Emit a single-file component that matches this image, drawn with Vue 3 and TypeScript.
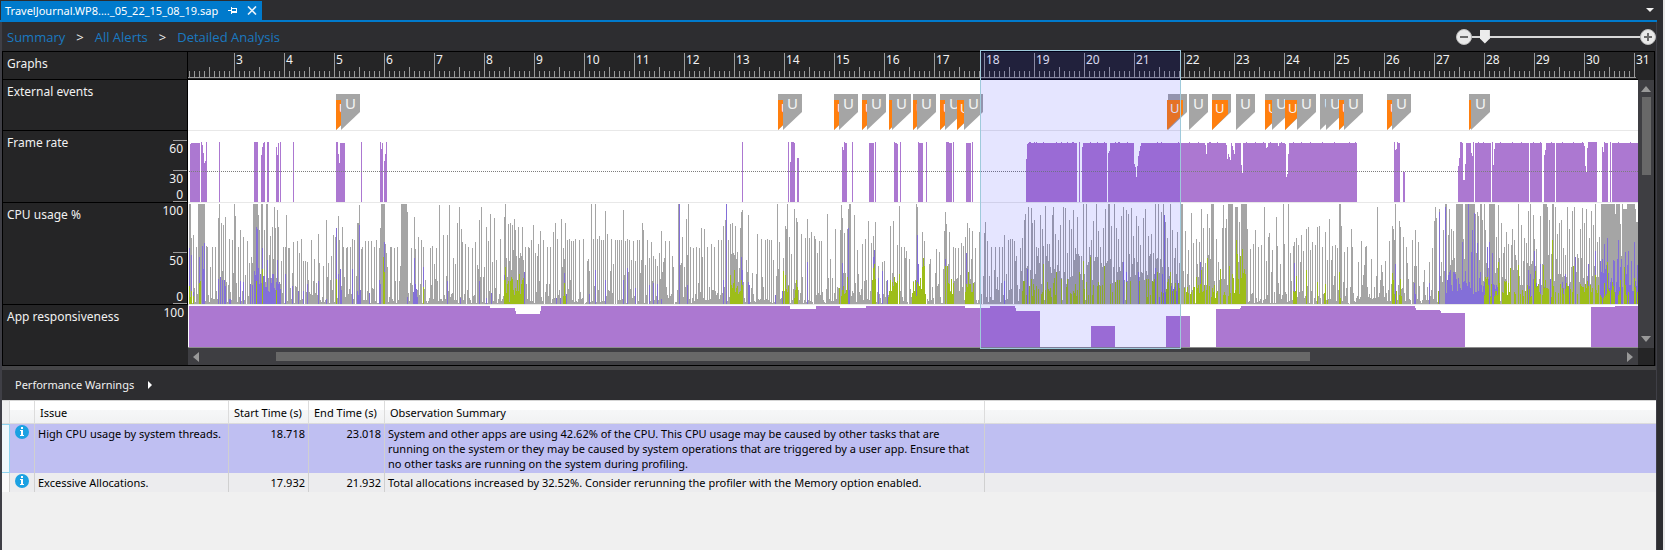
<script setup lang="ts">
import { ref } from 'vue'

type Bar = [x: number, width: number, height: number]

/* The visible window of the timeline starts at pixel 188 and spans 1450 units (50 per second). */
const ORIGIN = 188
const SPAN = 1450

const zoom = ref(5)

/* "x,h" or "x,w,h" entries, separated by blanks */
function parse(list: string): Bar[] {
  return list.trim().split(/\s+/).map((entry) => {
    const n = entry.split(',').map(Number)
    return n.length === 3 ? [n[0], n[1], n[2]] : [n[0], 1, n[1]]
  })
}

function barsPath(bars: Bar[], base: number): string {
  return bars
    .filter((b) => b[2] > 0)
    .map(([x, w, h]) => `M${x - ORIGIN} ${base - h}h${w}v${h}h${-w}z`)
    .join('')
}

function columnsPath(values: number[], base: number): string {
  return barsPath(values.map((h, i): Bar => [i + ORIGIN, 1, Math.round(h)]), base)
}

function pct(x: number): string {
  return ((x - ORIGIN) / SPAN) * 100 + '%'
}

let seed = 20140522
function rand(): number {
  seed = (seed * 1664525 + 1013904223) % 4294967296
  return seed / 4294967296
}

/* ---- ruler ---- */
const seconds = Array.from({ length: 29 }, (_, i) => ({ n: i + 3, x: 234 + i * 50 }))
const ticks = (() => {
  let d = ''
  for (let x = 189; x < 1638; x += 5) {
    const k = (x - 234) / 5
    const h = k % 10 === 0 ? 25 : k % 5 === 0 ? 11 : 7
    d += `M${x - ORIGIN} ${26 - h}h1v${h}h-1z`
  }
  return d
})()

/* ---- user input events; a "b" flag lies wholly behind the next one and carries no letter ---- */
type Flag = { x: number; kind: 'idle' | 'hot'; text: string }
const flags: Flag[] = `336b 336o 341g 778b 778o 783g 834b 834o 839g 862b 862o 867g 889b 889o 892g 913b 913o 917g
940b 940o 945g 957b 957o 964g 1168b 1167o 1189g 1212b 1212o 1236g 1265b 1265o 1272g 1285b 1285o 1297g
1320g 1326g 1339b 1339o 1344g 1387b 1387o 1392g 1469b 1469o 1471g`
  .split(/\s+/)
  .map((s) => ({ x: parseInt(s, 10), kind: s.endsWith('o') ? 'hot' : 'idle', text: s.endsWith('b') ? '' : 'U' }))

/* ---- frame rate ---- */
const frameBars = parse(`
190,58 191,9,59 201,60 202,57 203,49 204,39 205,41 206,60 219,60 254,4,60 261,47 262,55 263,59 264,60
267,2,60 276,55 277,47 278,59 280,60 293,60 336,2,60 338,48 339,39 340,5,59 361,60 380,60 381,53 382,59
384,41 385,48 386,60 742,60 788,60 790,40 791,3,60 794,59 797,2,44 842,55 843,52 844,60 845,2,59 852,60
869,5,59 875,60 894,60 895,2,59 897,58 900,60 918,60 919,4,59 926,60 946,3,60 949,3,59 953,60
966,5,59 972,60 1026,43 1027,58 1028,49,59 1079,60 1082,55 1083,24,59 1108,49 1109,51 1110,24,59
1134,38 1135,35 1136,25 1137,36 1138,46 1139,51 1140,56 1141,64,59 1205,57 1206,48 1207,19,59
1226,57 1227,43 1228,48 1229,45 1230,42 1231,59 1232,56 1233,52 1234,48 1235,6,59 1241,37 1242,29 1243,23,59
1266,54 1267,55 1268,10,59 1278,56 1279,6,59 1285,58 1286,25 1287,28 1288,48 1289,68,59
1394,60 1395,52 1396,53 1397,60 1398,2,59 1403,2,30 1458,36 1459,44 1460,2,60 1462,59 1463,2,22 1465,38
1466,5,59 1471,49 1472,46 1473,60 1475,16,59 1492,60 1493,37 1494,53 1495,34,59 1530,12,59 1544,47 1545,52
1546,9,59 1556,28,59 1584,56 1585,36 1586,30 1587,54 1588,9,60 1602,55 1603,50 1604,60 1605,3,59 1610,60
1612,26,59 1029,2,60 1034,60 1036,60 1043,60 1056,60 1061,60 1067,60 1072,2,60 1090,60 1097,60 1104,60
1115,60 1118,2,60 1127,60 1157,60 1161,60 1178,60 1189,60 1198,60 1209,2,60 1217,60 1246,60 1255,60
1263,60 1270,60 1281,60 1293,60 1301,60 1310,60 1322,60 1334,60 1349,60 1355,60 1478,60 1483,60 1500,60
1512,60 1521,60 1533,60 1540,60 1551,60 1562,60 1573,60 1582,60 1618,60 1630,60`)
const framePath = barsPath(frameBars, 71)

/* ---- CPU usage ---- */
const cpuPeaks = parse(`
189,2,100 191,66 193,69 196,57 198,7,100 206,58 207,57 210,37 212,57 215,57 218,86 219,100 221,81 223,79
225,87 229,65 232,64 234,100 235,88 238,57 240,74 243,67 247,63 249,41 251,47 253,5,100 258,89 259,74 261,2,100
264,74 266,2,100 270,68 272,77 274,97 275,76 277,94 278,77 281,43 283,57 285,57 286,89 288,2,56 292,31 293,62
297,63 299,51 301,65 305,43 307,42 311,64 314,45 318,70 319,41 323,38 326,84 328,41 331,48 333,69 335,67 338,88
339,64 342,77 343,57 346,56 347,57 350,57 352,65 354,64 357,2,81 359,99 361,55 362,57 365,63 368,63 371,63
374,57 376,64 379,56 380,76 381,4,100 385,60 386,51 390,2,57 394,56 397,57 401,6,100 407,92 411,56 414,87
415,55 418,67 421,64 423,57 430,56 432,58 436,56 439,99 443,69 447,69 449,99 453,46 455,40 457,81 459,97
461,75 462,62 465,60 468,57 472,56 475,62 477,39 479,84 481,97 484,37 486,77 488,63 490,90 492,42 494,86
496,44 500,65 504,87 505,100 506,46 508,80 509,43 510,81 512,79 513,54 514,85 515,74 516,48 518,77 519,46
520,51 522,77 523,44 525,57 528,57 529,56 531,64 533,79 535,51 537,48 538,60 540,73 543,64 547,57 550,57
553,72 555,81 557,65 561,85 562,37 563,56 564,45 565,81 567,64 569,65 571,63 573,63 575,65 579,64 583,65
587,43 589,33 591,100 593,65 595,100 597,65 599,68 601,64 603,64 605,93 607,70 611,65 613,40 615,64 617,64
619,64 621,64 623,94 625,63 627,65 629,64 631,44 633,63 635,43 637,64 639,64 641,44 642,81 643,74 645,39
647,64 649,46 651,62 653,48 655,45 657,38 659,51 661,73 663,42 664,46 665,63 669,63 673,37 678,100 679,37
682,67 686,85 687,49 688,100 690,57 693,56 696,57 699,56 701,76 702,47 704,75 707,57 711,60 714,57 718,64
721,64 723,78 725,84 728,64 730,80 732,81 735,78 737,52 740,76 741,92 742,94 746,44 748,89 757,70 761,65
765,64 767,65 769,64 771,64 773,44 777,100 779,62 783,46 785,78 786,75 787,100 789,67 791,50 794,95 796,86
797,82 801,70 805,66 807,85 809,66 811,72 814,68 815,65 817,51 819,63 821,63 827,90 830,45 835,75 840,74
841,99 842,86 844,71 847,75 848,95 849,2,100 854,89 857,54 862,60 865,65 868,83 871,61 873,68 875,82 878,38
882,42 890,78 893,83 897,59 899,98 901,57 904,57 906,53 909,45 916,100 917,97 922,72 924,63 930,45 936,55
939,52 944,73 945,92 946,80 949,72 953,57 955,56 958,56 961,61 963,58 965,67 967,81 969,76 972,73 975,56
979,72 984,71 985,82 987,63 991,57 995,57 999,57 1002,57 1004,69 1008,64 1010,65 1012,65 1014,63 1016,48
1020,56 1022,66 1024,84 1025,90 1028,97 1031,96 1032,81 1034,84 1036,57 1038,56 1040,89 1042,75 1043,58
1045,98 1047,60 1049,60 1052,89 1053,97 1055,70 1058,64 1060,79 1063,97 1065,96 1067,51 1069,84 1071,75
1073,94 1075,56 1077,87 1079,48 1083,100 1086,100 1089,57 1091,64 1093,83 1096,100 1098,73 1100,57 1103,76
1105,95 1108,2,100 1111,78 1114,100 1116,76 1118,65 1121,88 1123,97 1126,94 1128,90 1131,96 1133,68 1136,88
1138,78 1140,59 1143,86 1145,95 1148,68 1151,70 1155,100 1158,100 1161,92 1163,100 1165,82 1167,66 1170,100
1172,74 1175,56 1177,72 1181,2,100 1185,73 1188,54 1191,91 1193,61 1196,65 1199,62 1201,95 1203,76 1207,90
1209,76 1211,3,100 1216,65 1222,76 1223,99 1225,76 1226,85 1228,5,100 1235,3,97 1239,82 1241,6,100 1247,75
1250,55 1253,60 1255,74 1258,57 1261,59 1264,97 1268,67 1269,71 1272,54 1276,87 1277,58 1280,40 1283,100
1284,60 1288,100 1290,51 1293,58 1294,62 1296,66 1298,59 1301,69 1303,53 1306,75 1308,77 1310,54 1312,62
1315,59 1317,77 1319,78 1322,57 1325,72 1329,85 1332,58 1335,59 1337,56 1339,2,100 1341,78 1344,52 1347,57
1351,75 1352,57 1361,63 1365,57 1366,58 1371,45 1377,97 1381,39 1385,43 1389,63 1392,78 1393,75 1394,64
1395,100 1399,83 1400,77 1403,67 1406,57 1412,64 1415,74 1418,62 1424,34 1429,42 1432,56 1434,83 1435,97
1436,86 1439,95 1443,74 1445,2,100 1448,69 1449,95 1451,75 1453,73 1456,7,100 1463,65 1465,10,100 1475,90
1477,92 1478,88 1480,2,100 1482,84 1484,100 1485,74 1489,6,100 1496,67 1498,99 1501,81 1504,57 1506,72 1508,60
1511,59 1512,75 1514,64 1518,100 1521,79 1524,66 1526,61 1528,93 1530,100 1533,89 1534,65 1536,55 1540,88
1543,4,100 1547,97 1549,84 1552,2,100 1555,97 1557,70 1559,81 1561,84 1563,56 1567,97 1569,75 1572,93 1574,97
1577,50 1580,75 1582,96 1584,81 1586,95 1589,66 1591,93 1593,79 1595,100 1597,62 1599,67 1601,14,100 1615,90
1616,4,100 1620,80 1622,100 1623,4,95 1627,8,100 1635,95 1636,2,82`)

const denseRanges = [[251, 281], [504, 524], [730, 743], [840, 850], [1024, 1180], [1197, 1247], [1440, 1500], [1501, 1638]]

function fill(peaks: Bar[], ranges: number[][]): number[] {
  const v: number[] = new Array(SPAN).fill(0)
  for (const [from, to, top, share] of ranges) {
    for (let x = from; x < to; x++) if (rand() < share) v[x - ORIGIN] = top * (0.25 + 0.75 * rand())
  }
  for (const [x, w, h] of peaks) for (let i = 0; i < w; i++) v[x - ORIGIN + i] = h
  return v
}

const total = (() => {
  const v: number[] = []
  for (let i = 0; i < SPAN; i++) {
    const x = i + ORIGIN
    const dense = denseRanges.some(([a, b]) => x >= a && x < b)
    const r = rand()
    v.push(i === 0 ? 0 : dense ? (r < 0.12 ? 4 : 18 + rand() * 34) : r < 0.32 ? rand() * 4 : 4 + rand() * rand() * 46)
  }
  for (const [x, w, h] of cpuPeaks) for (let k = 0; k < w; k++) v[x - ORIGIN + k] = h
  return v
})()

const appCpu = fill(
  parse(`189,56 191,49 193,12 199,47 202,58 203,35 204,61 218,25 220,27 222,24 224,24 225,18 229,2,5 240,23 243,22 256,77
257,75 258,36 262,56 267,44 277,44 285,30 292,18 298,13 303,13 307,20 318,23 326,5 336,76 338,30 340,35 341,14 352,35
359,79 360,14 369,11 379,24 380,20 384,62 407,7 414,46 415,20 416,15 423,37 447,23 460,6 479,23 486,6 491,11 504,29
524,32 556,6 560,6 564,31 566,10 589,10 595,34 605,24 623,24 627,36 635,16 649,19 653,21 657,20 661,5 679,100 687,19
723,24 726,100 741,47 742,34 748,22 749,19 775,9 782,13 807,42 842,41 848,76 849,14 873,47 874,54 878,26 882,33 887,24
916,23 917,69 918,40 945,45 966,51 1004,23 1027,35 1123,42 1126,32 1138,32 1155,36 1162,30 1164,89 1177,24 1200,42
1294,41 1395,40 1414,21 1415,10 1429,21 1439,92 1445,97 1462,62 1468,100 1471,52 1472,74 1474,91 1477,61 1487,57
1489,62 1492,51 1528,34 1530,30 1534,53 1540,40 1550,25 1565,30 1575,47 1588,40 1595,53 1604,60 1607,66 1618,64
1625,52 1628,53 1634,62`),
  [[250, 281, 34, 0.95], [357, 361, 16, 1], [413, 418, 14, 0.8], [1158, 1180, 18, 0.4], [1446, 1484, 36, 1],
   [1484, 1500, 26, 0.8], [1525, 1575, 26, 0.35], [1600, 1638, 46, 0.9]],
)

const systemCpu = fill(
  parse(`189,18 191,13 199,21 200,23 256,23 262,35 276,14 336,25 383,47 384,32 423,17 504,24 505,37 509,2 564,21 734,34
783,33 785,29 796,24 847,27 872,24 873,36 874,40 894,27 899,30 922,37 923,46 924,38 945,38 947,38 951,25 966,20 968,32
1043,40 1056,32 1079,32 1083,43 1090,47 1104,38 1117,24 1139,23 1157,32 1170,32 1196,27 1201,34 1207,46 1220,35 1229,38
1236,64 1237,50 1240,48 1242,55 1296,28 1306,34 1317,22 1325,20 1339,32 1392,31 1393,24 1400,25 1438,13 1498,42
1510,36 1518,39 1535,33 1543,39 1552,64 1573,38 1595,29 1607,42 1624,37 1634,26`),
  [[189, 194, 10, 0.6], [505, 524, 30, 1], [563, 566, 20, 1], [730, 743, 29, 1], [783, 789, 24, 0.9], [794, 798, 22, 1],
   [839, 849, 22, 0.8], [872, 876, 30, 1], [888, 900, 24, 0.8], [912, 926, 28, 0.9], [945, 954, 24, 0.7],
   [965, 974, 22, 0.9], [1022, 1180, 26, 0.5], [1183, 1200, 22, 0.7], [1200, 1232, 22, 0.6], [1232, 1246, 36, 0.95],
   [1293, 1297, 16, 1], [1315, 1341, 14, 0.2], [1391, 1402, 16, 0.6], [1484, 1580, 27, 0.55], [1580, 1616, 24, 0.75],
   [1616, 1638, 26, 0.4]],
)

const totalPath = columnsPath(total, 101)
const appPath = columnsPath(appCpu, 101)
const systemPath = columnsPath(systemCpu, 101)

/* ---- app responsiveness ---- */
const responsePath = barsPath(
  parse(`189,301,41 490,25,39 515,1,36 516,24,33 540,1,36 541,249,41 790,26,38 816,24,41 840,26,39 866,99,41 965,25,39
990,25,41 1015,1,39 1016,24,36 1091,24,21 1166,24,31 1216,24,38 1240,1,39 1241,174,41 1415,1,39 1416,24,37 1440,1,36
1441,24,34 1591,24,40 1615,23,41`),
  42,
)

const warnings = [
  {
    issue: 'High CPU usage by system threads.',
    start: '18.718',
    end: '23.018',
    summary:
      'System and other apps are using 42.62% of the CPU. This CPU usage may be caused by other tasks that are running on the system or they may be caused by system operations that are triggered by a user app. Ensure that no other tasks are running on the system during profiling.',
    selected: true,
  },
  {
    issue: 'Excessive Allocations.',
    start: '17.932',
    end: '21.932',
    summary: 'Total allocations increased by 32.52%. Consider rerunning the profiler with the Memory option enabled.',
    selected: false,
  },
]
</script>

<template>
  <div class="window">
    <header class="tabs">
      <div class="tab">
        <span class="tab-name">TravelJournal.WP8...._05_22_15_08_19.sap</span>
        <button class="icon-btn" type="button" aria-label="Pin tab">
          <svg width="9" height="9" viewBox="0 0 9 9" shape-rendering="crispEdges" aria-hidden="true">
            <path d="M0 4h3v1H0zM3 1h1v7H3zM4 2h4v1H4zM4 5h4v2H4zM8 2h1v5H8z" fill="#fff" />
          </svg>
        </button>
        <button class="icon-btn" type="button" aria-label="Close tab">
          <svg width="10" height="9" viewBox="0 0 10 9" aria-hidden="true">
            <path d="M1 0.5L9 8.5M9 0.5L1 8.5" stroke="#e6f2fa" stroke-width="1.6" />
          </svg>
        </button>
      </div>
      <button class="icon-btn tab-list" type="button" aria-label="Open documents">
        <svg width="8" height="4" viewBox="0 0 8 4" aria-hidden="true"><path d="M0 0h8L4 4z" fill="#f1f1f1" /></svg>
      </button>
    </header>

    <div class="client">
      <div class="toolbar">
        <nav class="crumbs" aria-label="Breadcrumb">
          <a href="#summary">Summary</a>
          <span>&gt;</span>
          <a href="#alerts">All Alerts</a>
          <span>&gt;</span>
          <a href="#analysis">Detailed Analysis</a>
        </nav>
        <div class="zoom">
          <button class="round" type="button" aria-label="Zoom out">
            <svg width="16" height="16" viewBox="0 0 16 16" aria-hidden="true">
              <circle cx="8" cy="8" r="7.5" fill="#e9e9e9" stroke="#bdbdbd" />
              <path d="M4 7h8v2H4z" fill="#6b6b6b" />
            </svg>
          </button>
          <input v-model="zoom" class="slider" type="range" min="0" max="100" aria-label="Zoom level" />
          <button class="round" type="button" aria-label="Zoom in">
            <svg width="16" height="16" viewBox="0 0 16 16" aria-hidden="true">
              <circle cx="8" cy="8" r="7.5" fill="#e9e9e9" stroke="#bdbdbd" />
              <path d="M4 7h3V4h2v3h3v2H9v3H7V9H4z" fill="#6b6b6b" />
            </svg>
          </button>
        </div>
      </div>

      <section class="graphs">
        <div class="labels">
          <div class="label ruler-row">Graphs</div>
          <div class="label events-row">External events</div>
          <div class="label frame-row">
            Frame rate
            <div class="scale frame-scale"><span>60</span><span>30</span><span>0</span></div>
          </div>
          <div class="label cpu-row">
            CPU usage %
            <div class="scale cpu-scale"><span>100</span><span>50</span><span>0</span></div>
          </div>
          <div class="label response-row">
            App responsiveness
            <div class="scale response-scale"><span>100</span></div>
          </div>
        </div>

        <div class="plots">
          <div class="ruler ruler-row">
            <svg class="fill" :viewBox="`0 0 ${SPAN} 27`" preserveAspectRatio="none" shape-rendering="crispEdges" aria-hidden="true">
              <path :d="ticks" fill="#999" />
              <rect x="0" y="25" width="1448" height="1" fill="#999" />
            </svg>
            <span v-for="s in seconds" :key="s.n" class="second" :style="{ left: pct(s.x) }">{{ s.n }}</span>
          </div>
          <div class="plot events-row">
            <span v-for="(f, i) in flags" :key="i" class="flag" :class="f.kind" :style="{ left: pct(f.x) }">{{ f.text }}</span>
          </div>
          <div class="plot frame-row">
            <svg class="fill" :viewBox="`0 0 ${SPAN} 71`" preserveAspectRatio="none" shape-rendering="crispEdges" aria-hidden="true">
              <path :d="framePath" fill="#ac78d1" />
              <path d="M1 40.5H1450" stroke="#7d7d7d" stroke-dasharray="1 1" />
            </svg>
          </div>
          <div class="plot cpu-row">
            <svg class="fill" :viewBox="`0 0 ${SPAN} 101`" preserveAspectRatio="none" shape-rendering="crispEdges" aria-hidden="true">
              <path :d="totalPath" fill="#a5a5a5" />
              <path :d="appPath" fill="#836fd8" />
              <path :d="systemPath" fill="#9dbd19" />
            </svg>
          </div>
          <div class="plot response-plot">
            <svg class="fill" :viewBox="`0 0 ${SPAN} 42`" preserveAspectRatio="none" shape-rendering="crispEdges" aria-hidden="true">
              <path :d="responsePath" fill="#ac78d1" />
            </svg>
          </div>
          <div class="selection" :style="{ left: pct(980), width: (201 / SPAN) * 100 + '%' }"></div>
          <div class="hscroll">
            <svg width="6" height="10" viewBox="0 0 6 10" aria-hidden="true"><path d="M6 0v10L0 5z" fill="#999" /></svg>
            <div class="htrack"><div class="hthumb"></div></div>
            <svg width="6" height="10" viewBox="0 0 6 10" aria-hidden="true"><path d="M0 0v10l6-5z" fill="#999" /></svg>
          </div>
        </div>

        <div class="side">
          <div class="side-top"></div>
          <div class="vscroll">
            <svg width="10" height="6" viewBox="0 0 10 6" aria-hidden="true"><path d="M0 6h10L5 0z" fill="#999" /></svg>
            <div class="vtrack"><div class="vthumb"></div></div>
            <svg width="10" height="6" viewBox="0 0 10 6" aria-hidden="true"><path d="M0 0h10L5 6z" fill="#999" /></svg>
          </div>
          <div class="side-end"></div>
        </div>
      </section>

      <div class="splitter"></div>

      <button class="category" type="button">
        Performance Warnings
        <svg width="4" height="8" viewBox="0 0 4 8" aria-hidden="true"><path d="M0 0l4 4-4 4z" fill="#fff" /></svg>
      </button>

      <div class="results">
        <table>
          <colgroup>
            <col class="c-mark" /><col class="c-icon" /><col class="c-issue" /><col class="c-start" /><col class="c-end" />
            <col class="c-summary" /><col />
          </colgroup>
          <thead>
            <tr>
              <th class="mark"></th>
              <th></th>
              <th scope="col">Issue</th>
              <th scope="col">Start Time (s)</th>
              <th scope="col">End Time (s)</th>
              <th scope="col">Observation Summary</th>
              <th></th>
            </tr>
          </thead>
          <tbody>
            <tr v-for="w in warnings" :key="w.issue" :class="{ selected: w.selected }">
              <td class="mark"></td>
              <td class="info">
                <svg width="14" height="14" viewBox="0 0 14 14" role="img" aria-label="Information">
                  <circle cx="7" cy="7" r="7" fill="#1ba1e2" />
                  <path d="M6 2h2v2H6zM5 5h3v5h1v1H5v-1h1V6H5z" fill="#fff" />
                </svg>
              </td>
              <td>{{ w.issue }}</td>
              <td class="num">{{ w.start }}</td>
              <td class="num">{{ w.end }}</td>
              <td>{{ w.summary }}</td>
              <td class="last"></td>
            </tr>
          </tbody>
        </table>
      </div>
    </div>
  </div>
</template>

<style>
body {
  margin: 0;
  background: #fff;
}
</style>

<style scoped>
.window {
  display: flex;
  flex-direction: column;
  box-sizing: border-box;
  min-height: 100vh;
  padding-right: 6px;
  border-right: 2px solid #e8e8e8;
  background: #2d2d30;
  color: #f1f1f1;
  font-family: 'Noto Sans', 'Open Sans', sans-serif;
  font-size: 12px;
}
button {
  margin: 0;
  padding: 0;
  border: 0;
  background: none;
  color: inherit;
  font: inherit;
}
svg {
  display: block;
}
.tabs {
  display: flex;
  justify-content: space-between;
  align-items: center;
  height: 20px;
  padding: 0 3px 0 1px;
  border-bottom: 2px solid #007acc;
}
.tab {
  display: flex;
  align-items: center;
  align-self: flex-end;
  gap: 10px;
  height: 19px;
  padding: 0 5px 0 4px;
  background: #007acc;
  color: #fff;
  font-size: 11px;
}
.tab-name {
  line-height: 16px;
  white-space: nowrap;
}
.client {
  display: flex;
  flex: 1;
  flex-direction: column;
  border-right: 1px solid #3f3f46;
  border-left: 2px solid #3f3f46;
}
.toolbar {
  display: flex;
  justify-content: space-between;
  align-items: center;
  height: 29px;
  padding: 0 0 0 5px;
}
.crumbs {
  display: flex;
  gap: 11px;
  font-family: 'Open Sans', 'Noto Sans', sans-serif;
  font-size: 13px;
  line-height: 20px;
}
.crumbs a {
  color: #1a79c0;
  text-decoration: none;
}
.zoom {
  display: flex;
  align-items: center;
}
.slider {
  appearance: none;
  width: 168px;
  height: 16px;
  margin: 0;
  background: linear-gradient(#d8d8d8, #d8d8d8) center / 100% 2px no-repeat;
}
.slider::-webkit-slider-thumb {
  appearance: none;
  width: 10px;
  height: 14px;
  background: #ececec;
  clip-path: polygon(0 0, 100% 0, 100% 65%, 50% 100%, 0 65%);
}
.graphs {
  display: grid;
  grid-template-columns: 186px minmax(0, 1fr) 16px;
  margin-right: 1px;
  border: 1px solid #000;
  border-left: 0;
  background: #252526;
}
.labels {
  display: flex;
  flex-direction: column;
  border-left: 1px solid #000;
}
.label {
  position: relative;
  box-sizing: border-box;
  padding: 4px 4px 0 4px;
  border-right: 1px solid #000;
  border-bottom: 1px solid #000;
  line-height: 16px;
}
.ruler-row {
  height: 28px;
}
.events-row {
  height: 51px;
}
.frame-row {
  height: 72px;
}
.cpu-row {
  height: 102px;
}
.response-row {
  flex: 1;
  border: 0;
}
.scale {
  position: absolute;
  top: 0;
  right: 0;
  bottom: 0;
  display: flex;
  flex-direction: column;
  align-items: flex-end;
  width: 14px;
  line-height: 16px;
}
.scale span {
  display: flex;
  justify-content: flex-end;
  box-sizing: border-box;
  width: 14px;
  padding-right: 4px;
}
.frame-scale span:first-child {
  height: 30px;
  margin-top: 9px;
  border-top: 1px solid #999;
}
.frame-scale span:nth-child(2) {
  height: 16px;
  border-top: 1px solid #999;
}
.frame-scale span:last-child,
.cpu-scale span:last-child {
  height: 16px;
  margin-top: auto;
  border-bottom: 1px solid #999;
  line-height: 18px;
}
.cpu-scale span:first-child {
  height: 49px;
}
.cpu-scale span:nth-child(2) {
  border-top: 1px solid #999;
}
.plots {
  position: relative;
  display: flex;
  flex-direction: column;
}
.ruler {
  position: relative;
  box-sizing: border-box;
  border-bottom: 1px solid #000;
}
.fill {
  width: 100%;
  height: 100%;
}
.second {
  position: absolute;
  top: 0;
  margin-left: 2px;
  font-size: 12px;
  line-height: 16px;
}
.plot {
  position: relative;
  box-sizing: border-box;
  border-bottom: 1px solid #e8e8e8;
  background: #fff;
}
.response-plot {
  height: 43px;
  border-bottom-color: #8c8c8c;
}
.flag {
  position: absolute;
  box-sizing: border-box;
  color: #f4f4f4;
}
.idle {
  top: 14px;
  width: 19px;
  height: 36px;
  padding-left: 4px;
  background: #a5a5a5;
  clip-path: polygon(0 0, 100% 0, 100% 50%, 0 100%);
  font-size: 15px;
  line-height: 18px;
}
.hot {
  top: 20px;
  width: 16px;
  height: 30px;
  padding-left: 3px;
  background: #ff7f0e;
  clip-path: polygon(0 0, 100% 0, 100% 47%, 0 100%);
  font-size: 13px;
  line-height: 16px;
}
.selection {
  position: absolute;
  top: -2px;
  bottom: 16px;
  box-sizing: border-box;
  border: 1px solid #9fcadb;
  background: rgba(0, 0, 255, 0.1);
}
.hscroll {
  display: flex;
  align-items: center;
  height: 17px;
  padding: 0 5px;
  background: #3e3e42;
}
.htrack {
  flex: 1;
  height: 9px;
  margin: 0 5px 0 6px;
}
.hthumb {
  width: 73%;
  height: 9px;
  margin-left: 5%;
  background: #686868;
}
.side {
  display: flex;
  flex-direction: column;
}
.side-top {
  height: 28px;
}
.side-end {
  height: 17px;
}
.vscroll {
  display: flex;
  flex: 1;
  flex-direction: column;
  align-items: center;
  padding: 6px 0;
  background: #3e3e42;
}
.vtrack {
  flex: 1;
  width: 9px;
}
.vthumb {
  height: 78px;
  margin-top: 5px;
  background: #686868;
}
.splitter {
  height: 4px;
  background: #464648;
}
.category {
  display: flex;
  align-items: center;
  gap: 14px;
  height: 30px;
  padding: 0 13px;
  font-size: 11px;
  line-height: 16px;
}
.results {
  flex: 1;
  border-top: 1px solid #d5d5d5;
  background: #f0f0f0;
  color: #000;
  font-size: 11px;
}
table {
  width: 100%;
  border-collapse: separate;
  border-spacing: 0;
  table-layout: fixed;
}
.c-mark {
  width: 8px;
}
.c-icon {
  width: 25px;
}
.c-issue {
  width: 194px;
}
.c-start {
  width: 80px;
}
.c-end {
  width: 76px;
}
.c-summary {
  width: 600px;
}
th {
  box-sizing: border-box;
  height: 23px;
  padding: 0 4px 0 5px;
  border-right: 1px solid #dcdcdc;
  border-bottom: 1px solid #dcdcdc;
  background: linear-gradient(#fff 9px, #f6f7f8 9px, #f1f2f3);
  font-weight: 400;
  text-align: left;
  white-space: nowrap;
}
th.mark {
  background: #f0f0f0;
}
td {
  padding: 2px 3px;
  border-right: 1px solid #d0d0d0;
  background: #ececee;
  line-height: 15px;
  vertical-align: top;
}
th:last-child,
td.last {
  border-right: 0;
}
.num {
  text-align: right;
}
.info {
  padding: 1px 5px;
}
td.mark {
  padding: 0;
  background: #fafafa;
}
.selected td {
  background: #bfbff2;
}
.selected td.mark {
  border: 1px solid #8fd4f0;
  border-left: 0;
  background: #f0f8fc;
}
</style>
